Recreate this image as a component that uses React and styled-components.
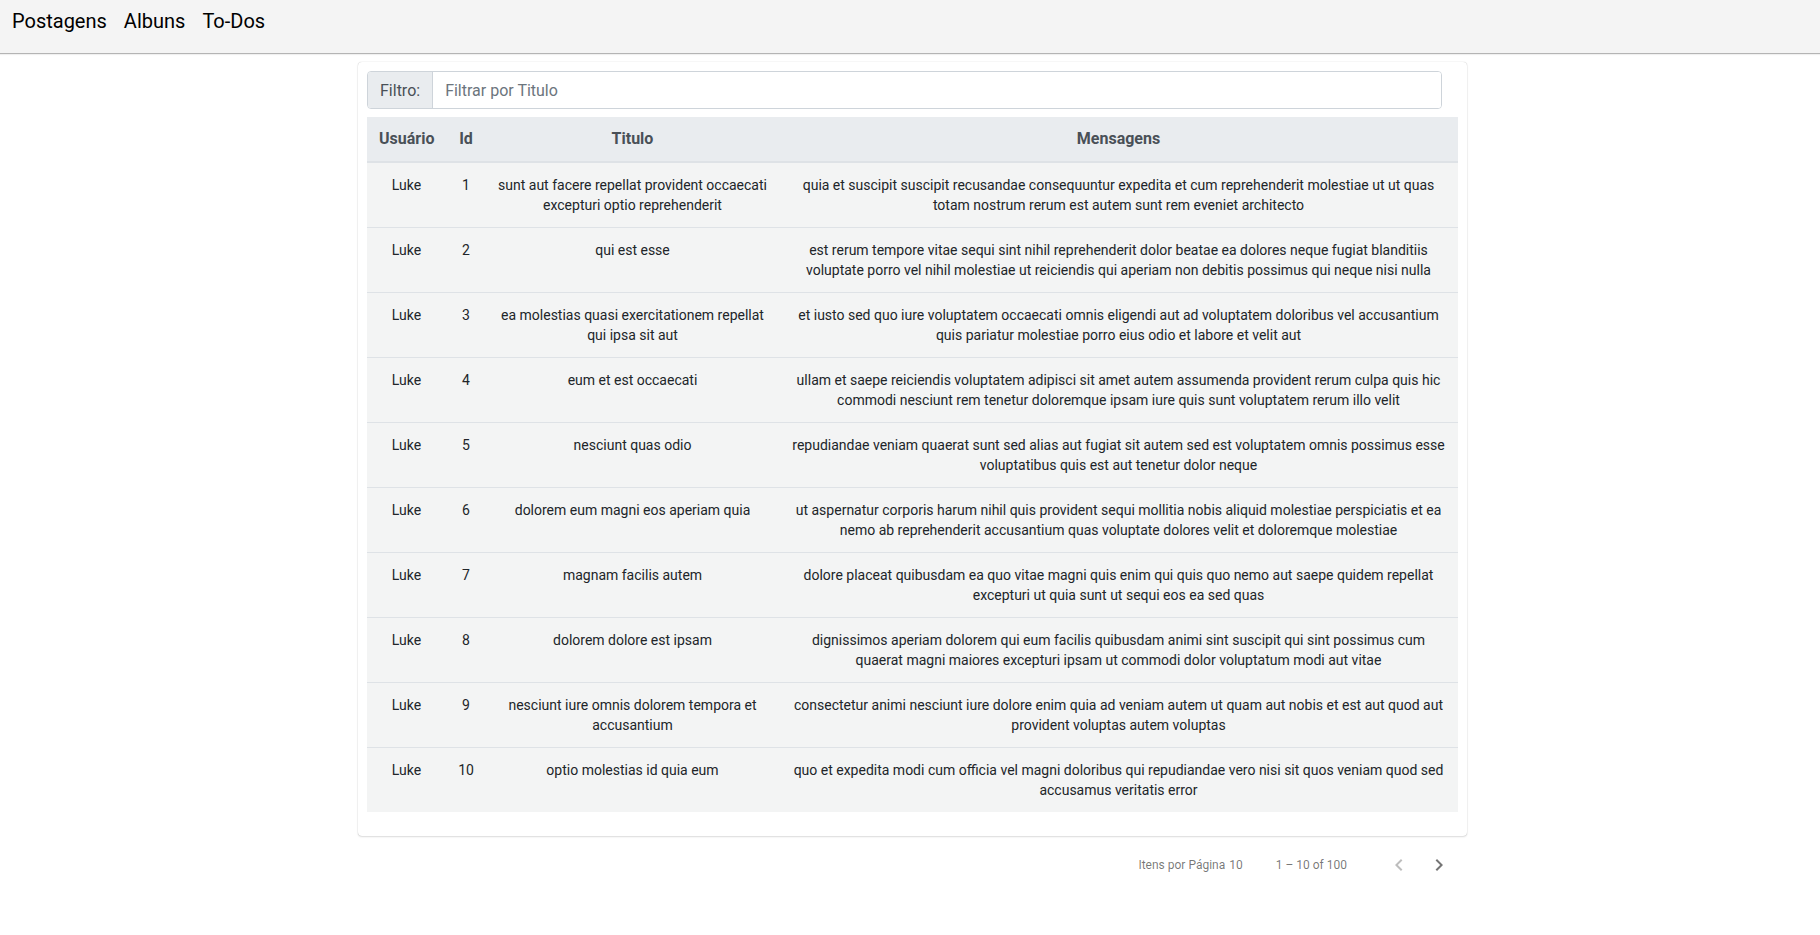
import React from "react";
import styled, { createGlobalStyle } from "styled-components";

const GlobalStyle = createGlobalStyle`
  * { box-sizing: border-box; }
  html, body { margin: 0; padding: 0; background: #fff; }
  body { font-family: Roboto, "Liberation Sans", Arial, sans-serif; color: #212529; }
`;

const TopBar = styled.header`
  display: flex;
  align-items: flex-start;
  gap: 17px;
  height: 54px;
  padding: 6px 0 0 12px;
  background: #f4f4f4;
  border-bottom: 1px solid #b4b4b4;
  box-shadow: 0 1px 1px rgba(0, 0, 0, 0.06);
`;

const NavLink = styled.a`
  font-size: 20px;
  line-height: 30px;
  color: #000;
  text-decoration: none;
  cursor: pointer;
`;

const Main = styled.main`
  padding: 8px 0 0 358px;
`;

const Card = styled.section`
  width: 1109px;
  padding: 9px 9px 8px 9px;
  background: #fff;
  border-radius: 4px;
  box-shadow: 0 1px 2px rgba(0, 0, 0, 0.12), 0 0 1px rgba(0, 0, 0, 0.28);
`;

const InputGroup = styled.div`
  display: flex;
  height: 38px;
  margin: 0 16px 8px 0;
  border: 1px solid #ced4da;
  border-radius: 4px;
  overflow: hidden;
`;

const Addon = styled.span`
  display: flex;
  align-items: center;
  padding: 0 12px;
  background: #e9ecef;
  border-right: 1px solid #ced4da;
  font-size: 16px;
  color: #495057;
`;

const FilterInput = styled.input`
  flex: 1;
  border: 0;
  outline: none;
  padding: 0 12px;
  font-family: Roboto, "Liberation Sans", Arial, sans-serif;
  font-size: 16px;
  color: #495057;
  background: #fff;
  &::placeholder { color: #6c757d; }
`;

const Table = styled.table`
  width: 100%;
  table-layout: fixed;
  border-collapse: collapse;
  margin-bottom: 16px;
`;

const HeadCell = styled.th`
  padding: 12px;
  font-size: 16px;
  line-height: 20px;
  font-weight: 700;
  color: #495057;
  background: #e9ecef;
  text-align: center;
  vertical-align: bottom;
  border-bottom: 2px solid #dee2e6;
`;

const Row = styled.tr`
  background: #f3f4f4;
  & + & td { border-top: 1px solid #dee2e6; }
`;

const Cell = styled.td`
  padding: 12px;
  font-size: 14px;
  line-height: 20px;
  color: #212529;
  text-align: center;
  vertical-align: top;
`;

const Paginator = styled.nav`
  width: 1109px;
  min-height: 56px;
  margin-top: 1px;
  display: flex;
  align-items: center;
  justify-content: flex-end;
  padding: 0 8px;
  font-size: 12px;
  color: rgba(0, 0, 0, 0.54);
`;

const PageSize = styled.div`
  display: flex;
  gap: 4px;
  margin-right: 9px;
`;

const RangeLabel = styled.div`
  margin: 0 32px 0 24px;
`;

const IconButton = styled.button`
  width: 40px;
  height: 40px;
  padding: 0;
  border: 0;
  background: transparent;
  display: flex;
  align-items: center;
  justify-content: center;
  color: ${(p) => (p.disabled ? "rgba(0,0,0,0.26)" : "rgba(0,0,0,0.54)")};
  cursor: ${(p) => (p.disabled ? "default" : "pointer")};
`;

const posts = [
  ["sunt aut facere repellat provident occaecati excepturi optio reprehenderit", "quia et suscipit suscipit recusandae consequuntur expedita et cum reprehenderit molestiae ut ut quas totam nostrum rerum est autem sunt rem eveniet architecto"],
  ["qui est esse", "est rerum tempore vitae sequi sint nihil reprehenderit dolor beatae ea dolores neque fugiat blanditiis voluptate porro vel nihil molestiae ut reiciendis qui aperiam non debitis possimus qui neque nisi nulla"],
  ["ea molestias quasi exercitationem repellat qui ipsa sit aut", "et iusto sed quo iure voluptatem occaecati omnis eligendi aut ad voluptatem doloribus vel accusantium quis pariatur molestiae porro eius odio et labore et velit aut"],
  ["eum et est occaecati", "ullam et saepe reiciendis voluptatem adipisci sit amet autem assumenda provident rerum culpa quis hic commodi nesciunt rem tenetur doloremque ipsam iure quis sunt voluptatem rerum illo velit"],
  ["nesciunt quas odio", "repudiandae veniam quaerat sunt sed alias aut fugiat sit autem sed est voluptatem omnis possimus esse voluptatibus quis est aut tenetur dolor neque"],
  ["dolorem eum magni eos aperiam quia", "ut aspernatur corporis harum nihil quis provident sequi mollitia nobis aliquid molestiae perspiciatis et ea nemo ab reprehenderit accusantium quas voluptate dolores velit et doloremque molestiae"],
  ["magnam facilis autem", "dolore placeat quibusdam ea quo vitae magni quis enim qui quis quo nemo aut saepe quidem repellat excepturi ut quia sunt ut sequi eos ea sed quas"],
  ["dolorem dolore est ipsam", "dignissimos aperiam dolorem qui eum facilis quibusdam animi sint suscipit qui sint possimus cum quaerat magni maiores excepturi ipsam ut commodi dolor voluptatum modi aut vitae"],
  ["nesciunt iure omnis dolorem tempora et accusantium", "consectetur animi nesciunt iure dolore enim quia ad veniam autem ut quam aut nobis et est aut quod aut provident voluptas autem voluptas"],
  ["optio molestias id quia eum", "quo et expedita modi cum officia vel magni doloribus qui repudiandae vero nisi sit quos veniam quod sed accusamus veritatis error"],
];

const Chevron = ({ dir }) => (
  <svg width="24" height="24" viewBox="0 0 24 24" fill="currentColor">
    {dir === "left" ? (
      <path d="M15.41 7.41L14 6l-6 6 6 6 1.41-1.41L10.83 12z" />
    ) : (
      <path d="M10 6L8.59 7.41 13.17 12l-4.58 4.59L10 18l6-6z" />
    )}
  </svg>
);

export default function App() {
  return (
    <>
      <GlobalStyle />
      <TopBar>
        <NavLink>Postagens</NavLink>
        <NavLink>Albuns</NavLink>
        <NavLink>To-Dos</NavLink>
      </TopBar>
      <Main>
        <Card>
          <InputGroup>
            <Addon>Filtro:</Addon>
            <FilterInput placeholder="Filtrar por Titulo" />
          </InputGroup>
          <Table>
            <colgroup>
              <col style={{ width: 79 }} />
              <col style={{ width: 40 }} />
              <col style={{ width: 293 }} />
              <col />
            </colgroup>
            <thead>
              <tr>
                <HeadCell>Usuário</HeadCell>
                <HeadCell>Id</HeadCell>
                <HeadCell>Titulo</HeadCell>
                <HeadCell>Mensagens</HeadCell>
              </tr>
            </thead>
            <tbody>
              {posts.map(([title, body], i) => (
                <Row key={i}>
                  <Cell>Luke</Cell>
                  <Cell>{i + 1}</Cell>
                  <Cell>{title}</Cell>
                  <Cell>{body}</Cell>
                </Row>
              ))}
            </tbody>
          </Table>
        </Card>
        <Paginator>
          <PageSize>
            <span>Itens por Página</span>
            <span>10</span>
          </PageSize>
          <RangeLabel>1 – 10 of 100</RangeLabel>
          <IconButton disabled aria-label="Anterior">
            <Chevron dir="left" />
          </IconButton>
          <IconButton aria-label="Próxima">
            <Chevron dir="right" />
          </IconButton>
        </Paginator>
      </Main>
    </>
  );
}
